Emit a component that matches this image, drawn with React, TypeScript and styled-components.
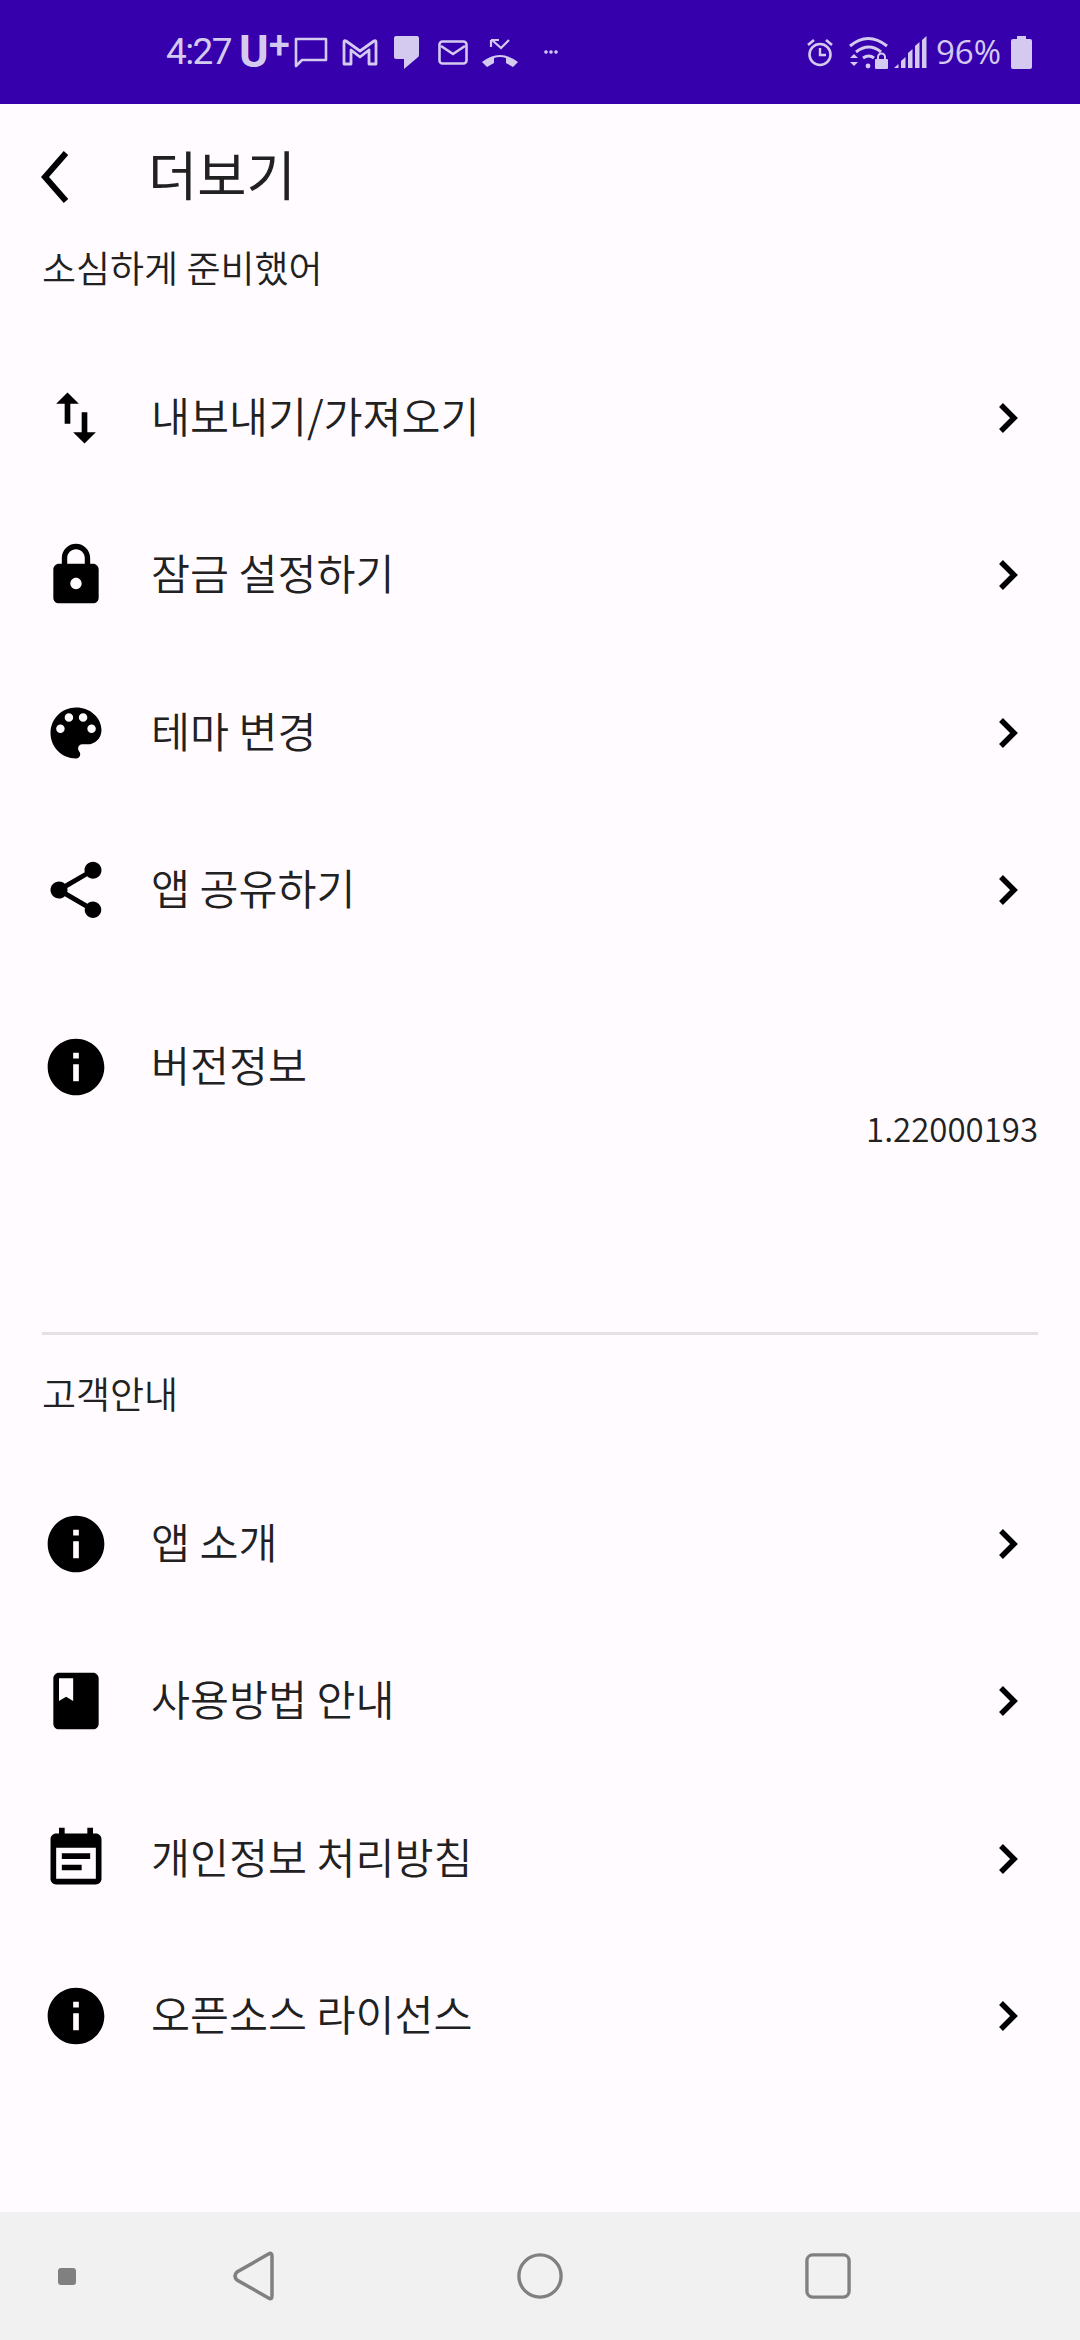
import React, { ReactNode } from "react";
import styled, { createGlobalStyle } from "styled-components";

const GlobalStyle = createGlobalStyle`
  html, body {
    margin: 0;
    padding: 0;
    background: #fffbff;
  }
  * {
    box-sizing: border-box;
  }
`;

const PATHS = {
  swap: "M16 17.01V10h-2v7.01h-3L15 21l4-3.99h-3zM9 3L5 6.99h3V14h2V6.99h3L9 3z",
  lock: "M18 8h-1V6c0-2.76-2.24-5-5-5S7 3.24 7 6v2H6c-1.1 0-2 .9-2 2v10c0 1.1.9 2 2 2h12c1.1 0 2-.9 2-2V10c0-1.1-.9-2-2-2zm-6 9c-1.1 0-2-.9-2-2s.9-2 2-2 2 .9 2 2-.9 2-2 2zm3.1-9H8.9V6c0-1.71 1.39-3.1 3.1-3.1 1.71 0 3.1 1.39 3.1 3.1v2z",
  palette:
    "M12 3c-4.97 0-9 4.03-9 9s4.03 9 9 9c.83 0 1.5-.67 1.5-1.5 0-.39-.15-.74-.39-1.01-.23-.26-.38-.61-.38-.99 0-.83.67-1.5 1.5-1.5H16c2.76 0 5-2.24 5-5 0-4.42-4.03-8-9-8zm-5.5 9c-.83 0-1.5-.67-1.5-1.5S5.67 9 6.5 9 8 9.67 8 10.5 7.33 12 6.5 12zm3-4C8.67 8 8 7.33 8 6.5S8.67 5 9.5 5s1.5.67 1.5 1.5S10.33 8 9.5 8zm5 0c-.83 0-1.5-.67-1.5-1.5S13.67 5 14.5 5s1.5.67 1.5 1.5S15.33 8 14.5 8zm3 4c-.83 0-1.5-.67-1.5-1.5S16.67 9 17.5 9s1.5.67 1.5 1.5-.67 1.5-1.5 1.5z",
  share:
    "M18 16.08c-.76 0-1.44.3-1.96.77L8.91 12.7c.05-.23.09-.46.09-.7s-.04-.47-.09-.7l7.05-4.11c.54.5 1.25.81 2.04.81 1.66 0 3-1.34 3-3s-1.34-3-3-3-3 1.34-3 3c0 .24.04.47.09.7L8.04 9.81C7.5 9.31 6.79 9 6 9c-1.66 0-3 1.34-3 3s1.34 3 3 3c.79 0 1.5-.31 2.04-.81l7.12 4.16c-.05.21-.08.43-.08.65 0 1.61 1.31 2.92 2.92 2.92 1.61 0 2.92-1.31 2.92-2.92s-1.31-2.92-2.92-2.92z",
  info: "M12 2C6.48 2 2 6.48 2 12s4.48 10 10 10 10-4.48 10-10S17.52 2 12 2zm1 15h-2v-6h2v6zm0-8h-2V7h2v2z",
  book: "M18 2H6c-1.1 0-2 .9-2 2v16c0 1.1.9 2 2 2h12c1.1 0 2-.9 2-2V4c0-1.1-.9-2-2-2zM6 4h5v8l-2.5-1.5L6 12V4z",
  note: "M17 10H7v2h10v-2zm2-7h-1V1h-2v2H8V1H6v2H5c-1.11 0-1.99.9-1.99 2L3 19c0 1.1.89 2 2 2h14c1.1 0 2-.9 2-2V5c0-1.1-.9-2-2-2zm0 16H5V8h14v11zm-5-5H7v2h7v-2z",
};

type IconName = keyof typeof PATHS;

function MenuIcon({ name }: { name: IconName }) {
  return (
    <IconBox viewBox="0 0 24 24">
      <path d={PATHS[name]} fill="#000" />
    </IconBox>
  );
}

function Chevron() {
  return (
    <ChevronBox viewBox="0 0 36 36">
      <path d="M12 5 L25 18 L12 31" fill="none" stroke="#000" strokeWidth="5.5" />
    </ChevronBox>
  );
}

function MenuRow({ icon, title }: { icon: IconName; title: string }) {
  return (
    <Row>
      <MenuIcon name={icon} />
      <RowTitle>{title}</RowTitle>
      <Chevron />
    </Row>
  );
}

function StatusIcon({
  w,
  h,
  gap,
  children,
}: {
  w: number;
  h: number;
  gap?: number;
  children: ReactNode;
}) {
  return (
    <StatusSvg width={w} height={h} viewBox={`0 0 ${w} ${h}`} $gap={gap || 0}>
      {children}
    </StatusSvg>
  );
}

export default function App() {
  return (
    <Page>
      <GlobalStyle />
      <StatusBar>
        <StatusGroup>
          <Clock>4:27</Clock>
          <Carrier>
            U<sup>+</sup>
          </Carrier>
          <StatusIcon w={34} h={31} gap={5}>
            <path d="M2 2h30v21H8l-6 6z" fill="none" stroke={ICON} strokeWidth="2.6" strokeLinejoin="round" />
          </StatusIcon>
          <StatusIcon w={36} h={28} gap={14}>
            <path
              d="M2 26V4q0-2 2-1l14 10L32 3q2-1 2 1v22h-7V12l-9 7-9-7v14z"
              fill="none"
              stroke={ICON}
              strokeWidth="2.8"
              strokeLinejoin="round"
            />
          </StatusIcon>
          <StatusIcon w={25} h={33} gap={16}>
            <path d="M2 0h21q2 0 2 2v17q0 2-2 3L10 33V23H2q-2 0-2-2V2q0-2 2-2z" fill={ICON} />
          </StatusIcon>
          <StatusIcon w={30} h={25} gap={19}>
            <rect x="1.5" y="1.5" width="27" height="22" rx="3" fill="none" stroke={ICON} strokeWidth="2.6" />
            <path d="M3 6l12 8 12-8" fill="none" stroke={ICON} strokeWidth="2.6" />
          </StatusIcon>
          <StatusIcon w={36} h={29} gap={14}>
            <path d="M10 2l9 8 8-8" fill="none" stroke={ICON} strokeWidth="2.2" />
            <path d="M9 2h8M9 2v7" fill="none" stroke={ICON} strokeWidth="2.2" />
            <path d="M0 24q18-14 36 0l-5 5-7-4v-5q-6-2-12 0v5l-7 4z" fill={ICON} />
          </StatusIcon>
          <StatusIcon w={14} h={4} gap={26}>
            <circle cx="2" cy="2" r="1.8" fill={ICON} />
            <circle cx="7" cy="2" r="1.8" fill={ICON} />
            <circle cx="12" cy="2" r="1.8" fill={ICON} />
          </StatusIcon>
        </StatusGroup>
        <StatusGroup>
          <StatusIcon w={26} h={29}>
            <circle cx="13" cy="16.5" r="10.5" fill="none" stroke={ICON} strokeWidth="2.6" />
            <path d="M13 10v7h6" fill="none" stroke={ICON} strokeWidth="2.4" />
            <path d="M1 7l6-5M25 7l-6-5" fill="none" stroke={ICON} strokeWidth="2.6" />
          </StatusIcon>
          <StatusIcon w={39} h={33} gap={16}>
            <path d="M1 10q18-15 37 0" fill="none" stroke={ICON} strokeWidth="3" />
            <path d="M7 16q13-10 25 0" fill="none" stroke={ICON} strokeWidth="3" />
            <path d="M14 22q6-4 11 0" fill="none" stroke={ICON} strokeWidth="3" />
            <circle cx="19" cy="30" r="2.4" fill={ICON} />
            <path d="M1 22l4-4 4 4zM1 26l4 4 4-4z" fill={ICON} />
            <rect x="26" y="23" width="13" height="10" rx="1" fill={ICON} />
            <path d="M29 24v-3a3.5 3.5 0 0 1 7 0v3" fill="none" stroke={ICON} strokeWidth="2" />
          </StatusIcon>
          <StatusIcon w={33} h={32} gap={6}>
            <path d="M0 32l4.5-4v4zM7 32v-7l4.5-4v11zM14 32V17l4.5-4v19zM21 32V10l4.5-4v26zM28 32V4l4.5-4v32z" fill={ICON} />
          </StatusIcon>
          <Battery>96%</Battery>
          <StatusIcon w={21} h={33} gap={10}>
            <path d="M6 0h9v3h4q2 0 2 2v26q0 2-2 2H2q-2 0-2-2V5q0-2 2-2h4z" fill={ICON} />
          </StatusIcon>
        </StatusGroup>
      </StatusBar>

      <Main>
        <Header>
          <BackIcon viewBox="0 0 32 54">
            <path d="M27 3L6 27l21 24" fill="none" stroke="#000" strokeWidth="6" />
          </BackIcon>
          <Title>더보기</Title>
        </Header>

        <SectionLabel>소심하게 준비했어</SectionLabel>
        <RowList>
          <MenuRow icon="swap" title="내보내기/가져오기" />
          <MenuRow icon="lock" title="잠금 설정하기" />
          <MenuRow icon="palette" title="테마 변경" />
          <MenuRow icon="share" title="앱 공유하기" />
        </RowList>

        <VersionRow>
          <MenuIcon name="info" />
          <RowTitle>버전정보</RowTitle>
        </VersionRow>
        <VersionValue>1.22000193</VersionValue>

        <Divider />

        <SectionLabel>고객안내</SectionLabel>
        <RowList>
          <MenuRow icon="info" title="앱 소개" />
          <MenuRow icon="book" title="사용방법 안내" />
          <MenuRow icon="note" title="개인정보 처리방침" />
          <MenuRow icon="info" title="오픈소스 라이선스" />
        </RowList>
      </Main>

      <NavBar>
        <NavDot />
        <BackNavIcon viewBox="0 0 44 50">
          <path
            d="M41 5 L41 45 Q41 49 37.5 47 L6 29 Q2 25 6 21 L37.5 3 Q41 1 41 5z"
            fill="none"
            stroke={NAV}
            strokeWidth="3.5"
          />
        </BackNavIcon>
        <NavIcon $gap={242} viewBox="0 0 48 48">
          <circle cx="24" cy="24" r="22" fill="none" stroke={NAV} strokeWidth="3.5" />
        </NavIcon>
        <NavIcon $gap={242} viewBox="0 0 48 48">
          <rect x="2" y="2" width="44" height="44" rx="6" fill="none" stroke={NAV} strokeWidth="3.5" />
        </NavIcon>
      </NavBar>
    </Page>
  );
}

const ICON = "#d4caf0";
const NAV = "#808080";
const KR_FONT = `"Noto Sans CJK KR", "Noto Sans", sans-serif`;

const Page = styled.div`
  width: 1080px;
  height: 2340px;
  display: flex;
  flex-direction: column;
  background: #fffbff;
  color: #212121;
  font-family: ${KR_FONT};
  font-weight: 350;
  overflow: hidden;
`;

const StatusBar = styled.div`
  height: 104px;
  flex-shrink: 0;
  background: #3700ad;
  display: flex;
  align-items: center;
  justify-content: space-between;
  padding: 0 48px 0 166px;
  color: ${ICON};
`;

const StatusGroup = styled.div`
  display: flex;
  align-items: center;
`;

const StatusSvg = styled.svg<{ $gap: number }>`
  display: block;
  flex-shrink: 0;
  margin-left: ${(props) => props.$gap}px;
`;

const Clock = styled.span`
  font-family: Roboto, sans-serif;
  font-size: 37px;
  font-weight: 400;
  letter-spacing: -1.6px;
  line-height: 40px;
`;

const Carrier = styled.span`
  font-family: Roboto, sans-serif;
  font-size: 45px;
  font-weight: 700;
  line-height: 40px;
  margin-left: 8px;
  display: flex;
  width: 50px;

  sup {
    font-size: 38px;
    font-weight: 500;
    line-height: 26px;
    margin: 0;
  }
`;

const Battery = styled.span`
  font-family: "Open Sans", sans-serif;
  font-size: 33px;
  font-weight: 400;
  line-height: 40px;
  margin-left: 9px;
`;

const Main = styled.div`
  flex: 1;
  display: flex;
  flex-direction: column;
`;

const Header = styled.div`
  height: 143px;
  flex-shrink: 0;
  display: flex;
  align-items: center;
  padding-left: 39px;
`;

const BackIcon = styled.svg`
  width: 32px;
  height: 54px;
  display: block;
  margin-top: 3px;
`;

const Title = styled.div`
  font-size: 53.5px;
  line-height: 70px;
  margin-left: 77px;
  font-weight: 400;
  padding-bottom: 5px;
`;

const SectionLabel = styled.div`
  font-size: 37px;
  line-height: 40px;
  padding-left: 42px;
`;

const RowList = styled.div`
  display: flex;
  flex-direction: column;
  margin-top: 52px;
`;

const Row = styled.div`
  height: 157.5px;
  display: flex;
  align-items: center;
  padding: 0 42px;
`;

const VersionRow = styled(Row)`
  height: 88px;
  margin-top: 54px;
`;

const IconBox = styled.svg`
  width: 68px;
  height: 68px;
  flex-shrink: 0;
  display: block;
`;

const ChevronBox = styled.svg`
  width: 36px;
  height: 36px;
  flex-shrink: 0;
  display: block;
  margin-right: 13px;
`;

const RowTitle = styled.div`
  flex: 1;
  font-size: 42.4px;
  line-height: 60px;
  margin-left: 41px;
  padding-bottom: 6px;
`;

const VersionValue = styled.div`
  height: 40px;
  margin-top: -3px;
  line-height: 40px;
  font-size: 33px;
  text-align: right;
  padding-right: 42px;
`;

const Divider = styled.div`
  height: 3px;
  background: #e3e1e3;
  margin: 184px 42px 38px;
`;

const NavBar = styled.div`
  height: 128px;
  flex-shrink: 0;
  background: #f0f1f0;
  display: flex;
  align-items: center;
  padding-left: 58px;
`;

const NavDot = styled.div`
  width: 18px;
  height: 17px;
  border-radius: 3px;
  background: ${NAV};
`;

const NavIcon = styled.svg<{ $gap: number }>`
  width: 46px;
  height: 48px;
  display: block;
  margin-left: ${(props) => props.$gap}px;
`;

const BackNavIcon = styled.svg`
  width: 44px;
  height: 50px;
  display: block;
  margin-left: 155px;
`;
